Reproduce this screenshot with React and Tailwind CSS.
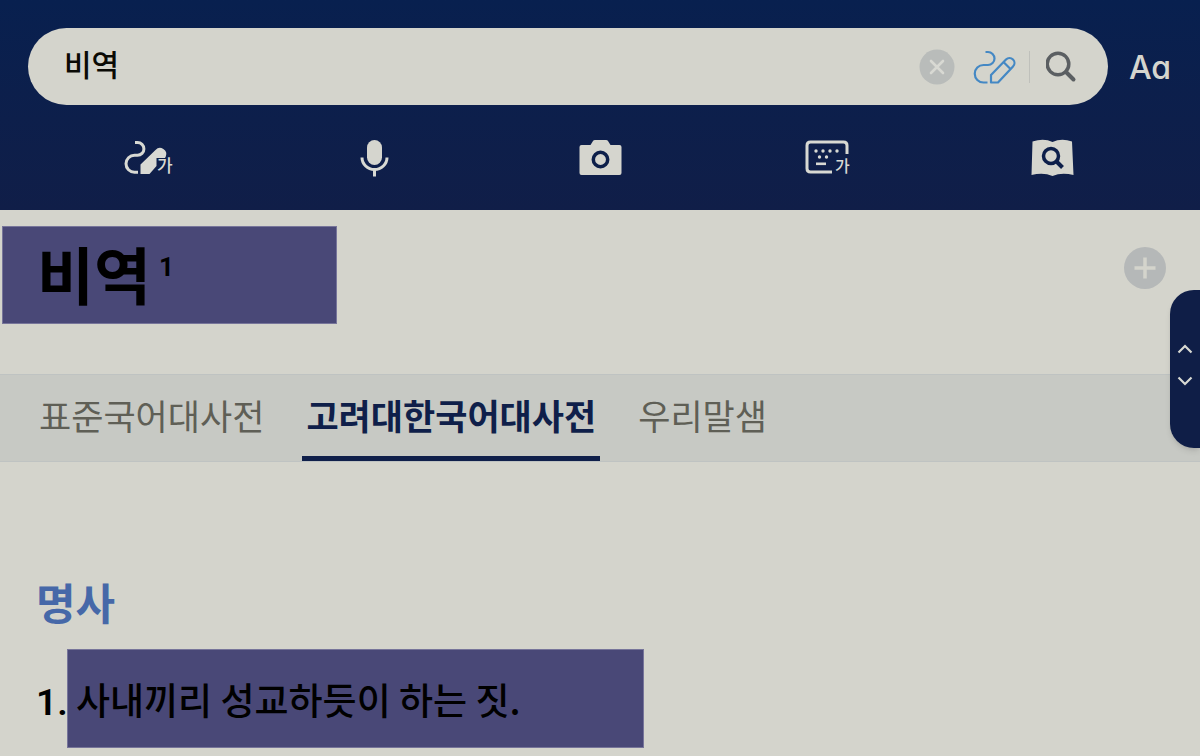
import React, { useState } from 'react';

const TABS = ['표준국어대사전', '고려대한국어대사전', '우리말샘'];

function HandwriteIcon() {
  return (
    <svg width="50" height="38" viewBox="0 0 50 38" fill="none" aria-hidden="true">
      <path
        d="M11 3.500h2.500a6.300 6.300 0 0 1 0 12.800h-3a8.500 8.500 0 0 0 0 17H14"
        stroke="#d8d9d3"
        strokeWidth="3"
      />
      <path
        d="M16.500 35v-9.500L31.500 11a6.200 6.200 0 0 1 10.300 6.500l-.8 1.500H32.500v8L25.500 35Z"
        fill="#d8d9d3"
      />
      <text x="33" y="33" fontSize="17" fontWeight="500" fill="#d8d9d3">가</text>
    </svg>
  );
}

function MicIcon() {
  return (
    <svg width="30" height="38" viewBox="0 0 30 38" fill="none" aria-hidden="true">
      <rect x="7" y="1" width="15" height="25" rx="7.5" fill="#d5d5ce" />
      <path d="M2 18.500a12.500 12 0 0 0 25 0" stroke="#d8d9d3" strokeWidth="3" />
      <path d="M14.500 30v7.500" stroke="#d8d9d3" strokeWidth="3" />
    </svg>
  );
}

function CameraIcon() {
  return (
    <svg width="44" height="38" viewBox="0 0 44 38" aria-hidden="true">
      <path
        d="M2.500 6h9l2.500-4Q14.500 1 16 1h11q1.500 0 2 1L31.500 6h9q2 0 2 2v26q0 2-2 2H2.500q-2 0-2-2V8q0-2 2-2Z"
        fill="#d5d5ce"
      />
      <circle cx="21.500" cy="20.500" r="7.200" fill="none" stroke="#0d1f4a" strokeWidth="3.500" />
    </svg>
  );
}

function KeyboardIcon() {
  return (
    <svg width="48" height="38" viewBox="0 0 48 38" fill="none" aria-hidden="true">
      <path
        d="M44 15V6.500Q44 3 40.500 3H7.500Q4 3 4 6.500v23Q4 33 7.500 33H29"
        stroke="#d8d9d3"
        strokeWidth="3"
      />
      <g fill="#d8d9d3">
        <circle cx="13" cy="12" r="1.700" />
        <circle cx="20" cy="12" r="1.700" />
        <circle cx="27" cy="12" r="1.700" />
        <circle cx="34" cy="12" r="1.700" />
        <circle cx="16.500" cy="18" r="1.700" />
        <circle cx="23.500" cy="18" r="1.700" />
        <rect x="13" y="23.500" width="10" height="2.600" />
      </g>
      <text x="32" y="33" fontSize="16" fontWeight="500" fill="#d8d9d3">가</text>
    </svg>
  );
}

function BookSearchIcon() {
  return (
    <svg width="44" height="38" viewBox="0 0 44 38" fill="none" aria-hidden="true">
      <path
        d="M1.500 2.500Q13-1 21.500 3q9-4 19.500-.500L42.500 36q-12-3-21 1-9-4-21-1Z"
        fill="#d5d5ce"
      />
      <circle cx="20" cy="17" r="7.500" stroke="#0d1f4a" strokeWidth="3.500" />
      <path d="M25.500 22.500l6 6" stroke="#0d1f4a" strokeWidth="4" />
    </svg>
  );
}

const TOOLS = [
  { label: '필기 인식기', Icon: HandwriteIcon },
  { label: '음성 검색', Icon: MicIcon },
  { label: '이미지 검색', Icon: CameraIcon },
  { label: '키보드', Icon: KeyboardIcon },
  { label: '사전 찾기', Icon: BookSearchIcon },
];

function SearchBar() {
  const [query, setQuery] = useState('비역');

  return (
    <form
      className="flex h-[77px] min-w-0 flex-1 items-center rounded-full bg-[#d4d4cc] pl-9 pr-[26px]"
      onSubmit={(e) => e.preventDefault()}
    >
      <input
        type="text"
        aria-label="검색어"
        value={query}
        onChange={(e) => setQuery(e.target.value)}
        className="h-13 min-w-0 flex-1 bg-transparent pb-2 text-[30px] font-medium text-[#0a0a05] outline-none"
      />
      <button type="button" aria-label="지우기" onClick={() => setQuery('')}>
        <svg width="36" height="36" viewBox="0 0 36 36" aria-hidden="true">
          <circle cx="18" cy="18" r="17.500" fill="#b9bcba" />
          <path d="M12 12l12 12M24 12L12 24" stroke="#d8d9d3" strokeWidth="2.600" strokeLinecap="round" />
        </svg>
      </button>
      <button type="button" aria-label="필기 입력" className="ml-[18px]">
        <svg width="44" height="36" viewBox="0 0 44 36" fill="none" stroke="#4488c4" strokeWidth="2.200" aria-hidden="true">
          <path d="M12.500 3h2.500a6.300 6.300 0 0 1 0 13h-4.500a8.600 8.600 0 0 0 0 17.500h4" />
          <path d="M18 33.500v-7.500L33 10.500a4.800 4.800 0 0 1 7 7L25 33.500Z" strokeLinejoin="round" />
          <path d="M30.500 13l7 7" />
        </svg>
      </button>
      <span className="ml-3 h-8 w-px bg-[#bfc0bb]" />
      <button type="submit" aria-label="검색" className="ml-4">
        <svg width="36" height="36" viewBox="0 0 36 36" fill="none" stroke="#5b5f62" aria-hidden="true">
          <circle cx="12" cy="15" r="10.800" strokeWidth="3.500" />
          <path d="M20 23l7.500 7.500" strokeWidth="4" strokeLinecap="round" />
        </svg>
      </button>
    </form>
  );
}

export default function App() {
  const [tab, setTab] = useState(1);

  return (
    <div className="relative min-h-screen overflow-hidden bg-[#d4d4cc] font-['Noto_Sans_CJK_KR',sans-serif] text-black">
      <header className="bg-linear-to-b from-[#08204f] to-[#101e48] pt-7">
        <div className="flex items-center pl-7 pr-7">
          <SearchBar />
          <button
            type="button"
            aria-label="Aa 글자 크기"
            className="ml-5 w-11 pt-0.5 text-center font-['Inter',sans-serif] text-[32px] font-medium text-[#d5d5ce] [font-feature-settings:'cv11']"
          >
            Aa
          </button>
        </div>
        <nav className="grid h-[105px] grid-cols-5 pl-9 pr-[34px]">
          {TOOLS.map(({ label, Icon }) => (
            <button key={label} type="button" aria-label={label} className="flex items-center justify-center">
              <Icon />
            </button>
          ))}
        </nav>
      </header>

      {/* Headword */}
      <section className="flex items-start justify-between pb-[50px] pl-0.5 pr-[33px] pt-4">
        <h1 className="flex h-[98px] w-[335px] items-start border border-[#77759a] bg-[#494877] pl-[34px] text-[62px] font-bold leading-[92px]">
          비역
          <sup className="top-0 ml-2 font-['Roboto',sans-serif] text-[26px] leading-[80px]">1</sup>
        </h1>
        <button type="button" aria-label="단어장에 추가" className="mt-5">
          <svg width="44" height="44" viewBox="0 0 44 44" aria-hidden="true">
            <circle cx="22" cy="22" r="21" fill="#b5b8b8" />
            <path d="M22 11.500v21M11.500 22h21" stroke="#d4d4cc" strokeWidth="3.500" />
          </svg>
        </button>
      </section>

      {/* Dictionary sources */}
      <div role="tablist" className="flex h-[88px] gap-[34px] border-y border-[#bfc3c2] bg-[#c7c9c4] pl-[35px]">
        {TABS.map((name, i) => (
          <button
            key={name}
            type="button"
            role="tab"
            aria-selected={i === tab}
            onClick={() => setTab(i)}
            className={
              'border-b-[5px] px-1 text-[35px] whitespace-nowrap ' +
              (i === tab
                ? 'border-[#0f1f4a] font-bold text-[#0f1f4a]'
                : 'border-transparent text-[#5f5f56]')
            }
          >
            {name}
          </button>
        ))}
      </div>

      {/* Meanings */}
      <main className="px-9 pt-[111px]">
        <h2 className="text-[43px] font-bold leading-[56px] text-[#4668a8]">명사</h2>
        <ol className="mt-5">
          <li className="flex items-baseline text-[37px] font-medium leading-[98px]">
            <span className="w-[31px] whitespace-nowrap font-['Roboto',sans-serif] font-semibold">1.</span>
            <p className="h-[99px] w-[577px] border border-[#77759a] bg-[#494877] pl-2">
              사내끼리 성교하듯이 하는 짓.
            </p>
          </li>
        </ol>
      </main>

      {/* Floating previous / next handle */}
      <div className="absolute right-0 top-[290px] flex h-[158px] w-[30px] flex-col items-center justify-center rounded-l-3xl bg-[#0f1e47] pb-2 shadow-md">
        <button type="button" aria-label="이전" className="flex h-8 items-center">
          <svg width="16" height="10" viewBox="0 0 16 10" fill="none" stroke="#d8d9d3" strokeWidth="2.200" aria-hidden="true">
            <path d="M1.500 8.500L8 2l6.500 6.500" />
          </svg>
        </button>
        <button type="button" aria-label="다음" className="flex h-8 items-center">
          <svg width="16" height="10" viewBox="0 0 16 10" fill="none" stroke="#d8d9d3" strokeWidth="2.200" aria-hidden="true">
            <path d="M1.500 1.500L8 8l6.500-6.500" />
          </svg>
        </button>
      </div>
    </div>
  );
}
